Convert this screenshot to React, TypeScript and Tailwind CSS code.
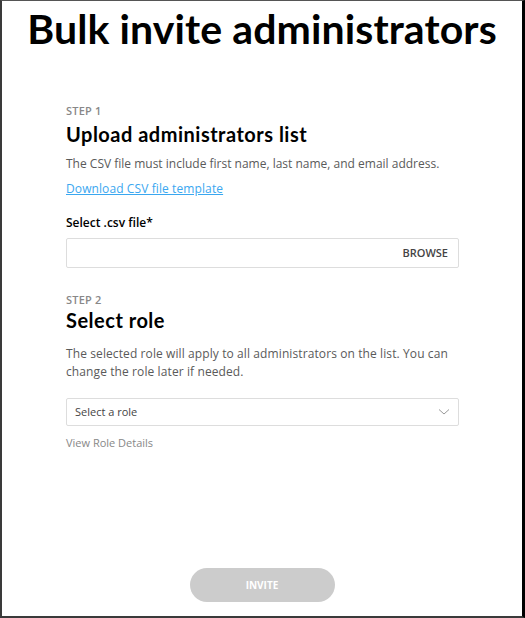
import React from "react";

export default function App() {
  const body = { fontFamily: '"Open Sans", "Noto Sans", sans-serif' };
  const head = { fontFamily: 'Lato, "Noto Sans", sans-serif' };
  return (
    <div className="w-[525px] h-[618px] bg-white">
      <div className="w-full h-full border-l-2 border-l-[#3a3a3a] border-r-[3px] border-r-black border-b-2 border-b-[#3a3a3a] border-t border-t-[#555] flex flex-col">
        <h1 style={head} className="text-[41px] leading-[46px] font-bold text-black text-center mt-[5px] tracking-[0.1px]">
          Bulk invite administrators
        </h1>
        <div style={body} className="pl-[64px] pr-[63px] mt-[52px] flex flex-col">
          <div className="text-[11px] leading-[14px] font-semibold text-[#888] tracking-[0.2px]">STEP 1</div>
          <div style={head} className="text-[20px] leading-[24px] font-bold text-black mt-[4px] tracking-[0.5px]">Upload administrators list</div>
          <p className="text-[12px] leading-[16px] text-[#5a5a5a] mt-[10px]">
            The CSV file must include first name, last name, and email address.
          </p>
          <a className="text-[12px] leading-[16px] text-[#3aa7f0] underline mt-[9px] self-start tracking-[0.1px]">Download CSV file template</a>
          <div className="text-[12px] leading-[16px] font-semibold text-black mt-[18px]">Select .csv file*</div>
          <div className="mt-[7px] h-[30px] border border-[#ddd] rounded-[2px] flex items-center justify-end pr-[10px]">
            <span className="text-[11px] font-semibold text-[#444]">BROWSE</span>
          </div>
          <div className="text-[11px] leading-[14px] font-semibold text-[#888] mt-[25px] tracking-[0.2px]">STEP 2</div>
          <div style={head} className="text-[20px] leading-[24px] font-bold text-black mt-[1px] tracking-[0.5px]">Select role</div>
          <p className="text-[12px] leading-[18px] text-[#5a5a5a] mt-[13px] tracking-[0.1px]">
            The selected role will apply to all administrators on the list. You can change the role later if needed.
          </p>
          <div className="mt-[17px] h-[28px] border border-[#ddd] rounded-[2px] flex items-center justify-between pl-[8px] pr-[8px]">
            <span className="text-[11px] text-[#444]">Select a role</span>
            <svg width="12" height="8" viewBox="0 0 12 8" fill="none">
              <path d="M1 1.5 L6 6 L11 1.5" stroke="#999" strokeWidth="1" />
            </svg>
          </div>
          <div className="text-[11px] leading-[14px] text-[#888] mt-[10px]">View Role Details</div>
        </div>
        <div className="flex-1" />
        <div className="flex justify-center mb-[14px]">
          <div style={body} className="w-[145px] h-[34px] rounded-full bg-[#cccccc] flex items-center justify-center text-[10px] font-bold text-white">
            INVITE
          </div>
        </div>
      </div>
    </div>
  );
}
